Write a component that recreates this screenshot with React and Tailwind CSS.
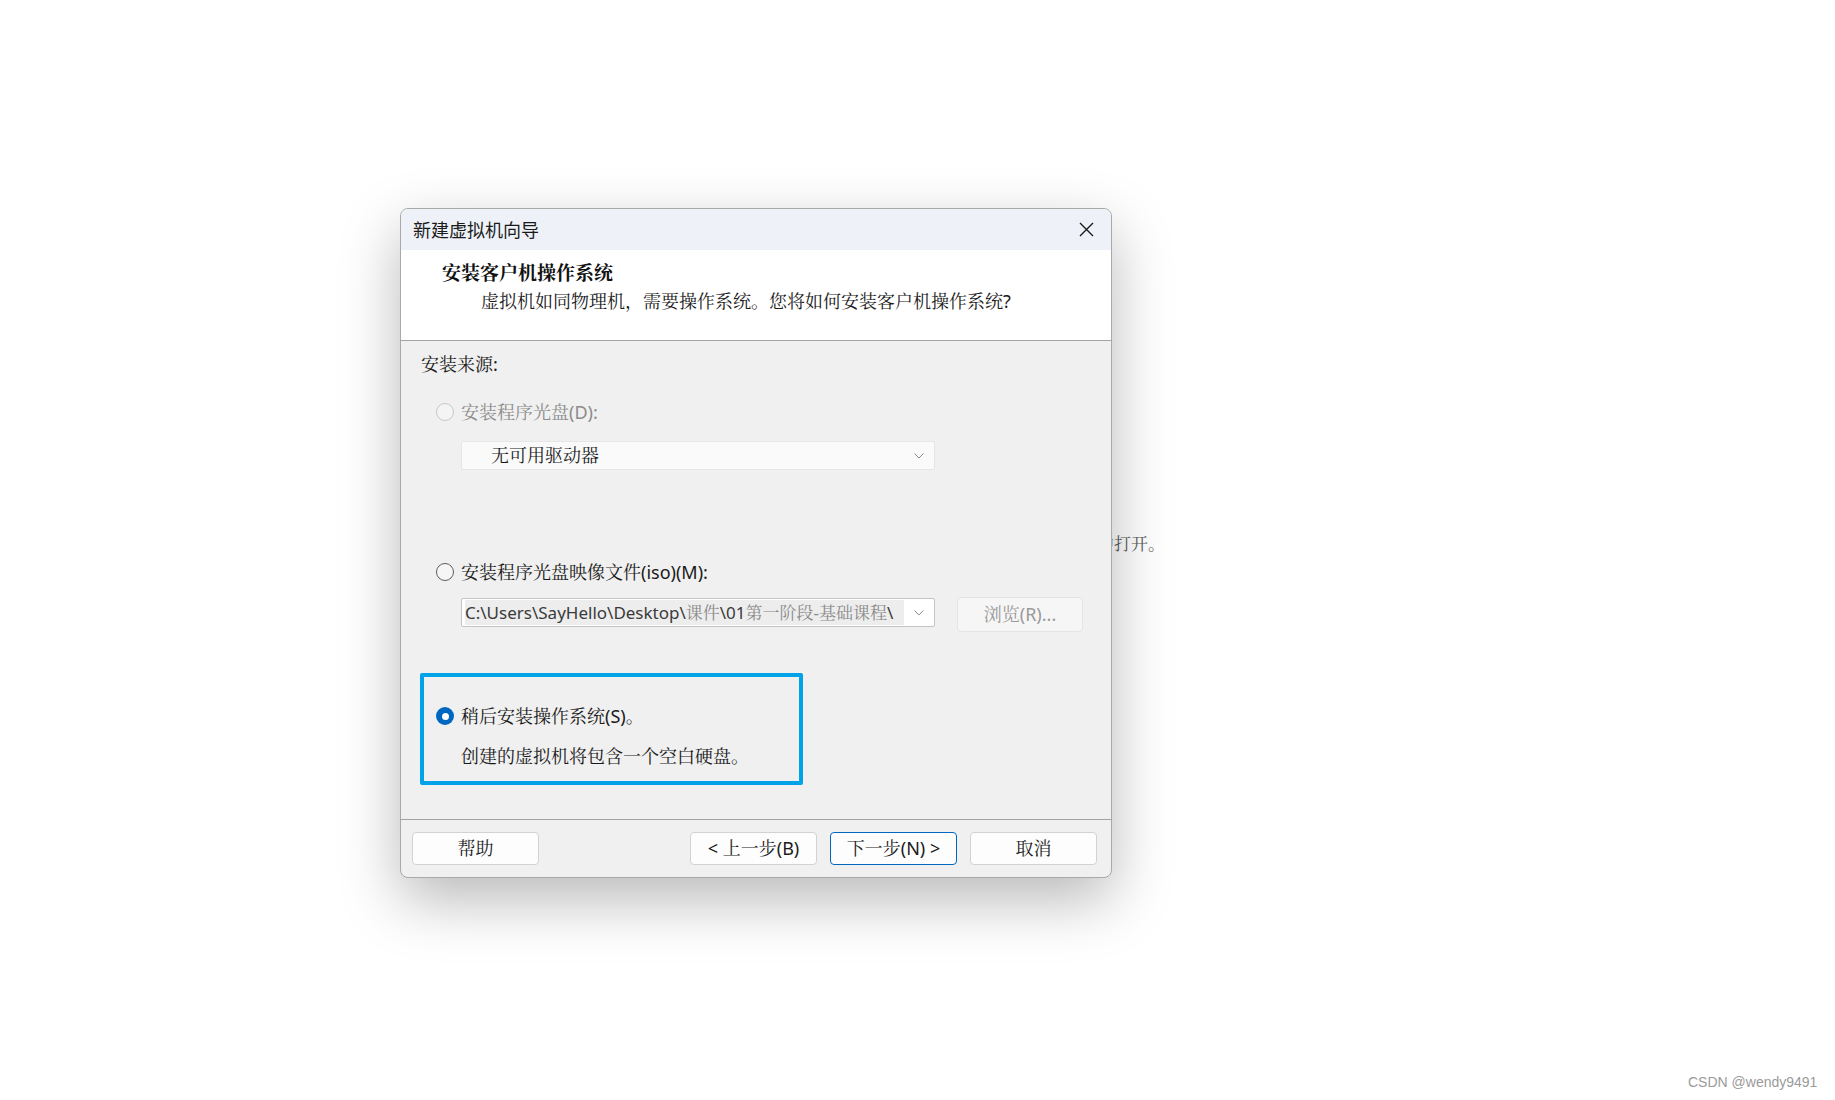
import React from 'react';

const font = "font-['Noto_Sans','Noto_Serif_CJK_SC','Noto_Sans_CJK_SC',sans-serif]";

const Chevron = () => (
  <svg width="10" height="6" viewBox="0 0 10 6" fill="none">
    <polyline points="0.5,0.5 5,5 9.5,0.5" stroke="#8a8a8a" strokeWidth="1" />
  </svg>
);

const Radio = ({ state }) => {
  if (state === 'checked') {
    return (
      <div className="w-[18px] h-[18px] rounded-full bg-[#0067c0] flex items-center justify-center shrink-0">
        <div className="w-[7px] h-[7px] rounded-full bg-white" />
      </div>
    );
  }
  if (state === 'disabled') {
    return <div className="w-[18px] h-[18px] rounded-full border border-[#c6c6c6] bg-[#f4f4f4] shrink-0" />;
  }
  return <div className="w-[18px] h-[18px] rounded-full border-[1.5px] border-[#5c5c5c] bg-[#f6f6f6] shrink-0" />;
};

const Button = ({ children, primary }) => (
  <button
    className={
      primary
        ? 'w-[127px] h-[33px] rounded-[4px] border border-[#0067c0] bg-[#fdfdfd] text-[18px] text-[#1a1a1a] flex items-center justify-center'
        : 'w-[127px] h-[33px] rounded-[4px] border border-[#d2d2d2] bg-[#fdfdfd] text-[18px] text-[#1a1a1a] flex items-center justify-center'
    }
  >
    {children}
  </button>
);

export default function App() {
  return (
    <div className={`relative w-[1835px] h-[1100px] bg-white overflow-hidden ${font}`}>
      {/* page text behind the dialog */}
      <div className="absolute left-[1097px] top-[533px] text-[17px] leading-[22px] text-[#5a5a5a]">中打开。</div>

      <div className="pl-[400px] pt-[208px]">
        <div className="relative z-10 w-[712px] h-[670px] rounded-[8px] border border-[#a9a9a9] bg-[#f0f0f0] overflow-hidden flex flex-col shadow-[0_22px_60px_rgba(0,0,0,0.28)]">
          {/* title bar */}
          <div className="h-[41px] shrink-0 bg-[#eef2f8] flex items-center justify-between pl-[12px] pr-[17px]">
            <span className="text-[18px] text-[#1a1a1a] font-['Noto_Sans_CJK_SC',sans-serif]">新建虚拟机向导</span>
            <svg width="15" height="15" viewBox="0 0 15 15">
              <path d="M1 1 L14 14 M14 1 L1 14" stroke="#1a1a1a" strokeWidth="1.4" />
            </svg>
          </div>

          {/* header */}
          <div className="h-[91px] shrink-0 bg-white border-b border-[#a3a3a3] pt-[13px]">
            <div className="pl-[41px] text-[19px] leading-[21px] font-bold text-[#111]">安装客户机操作系统</div>
            <div className="pl-[80px] mt-[7px] text-[18px] leading-[20px] text-[#1a1a1a]">
              虚拟机如同物理机，需要操作系统。您将如何安装客户机操作系统?
            </div>
          </div>

          {/* body */}
          <div className="h-[478px] shrink-0 pt-[13px]">
            <div className="pl-[20px] text-[18px] leading-[20px] text-[#1a1a1a]">安装来源:</div>

            <div className="mt-[28px] pl-[35px] h-[20px] flex items-center gap-[7px]">
              <Radio state="disabled" />
              <span className="text-[18px] leading-[20px] text-[#8c8c8c]">安装程序光盘(D):</span>
            </div>

            <div className="mt-[19px] ml-[60px] w-[474px] h-[29px] bg-[#fafafa] border border-[#e6e6e6] rounded-[2px] flex items-center justify-between pl-[29px] pr-[10px]">
              <span className="text-[18px] text-[#1a1a1a]">无可用驱动器</span>
              <Chevron />
            </div>

            <div className="mt-[92px] pl-[35px] h-[20px] flex items-center gap-[7px]">
              <Radio state="empty" />
              <span className="text-[18px] leading-[20px] text-[#1a1a1a]">安装程序光盘映像文件(iso)(M):</span>
            </div>

            <div className="mt-[15px] pl-[60px] flex items-start gap-[22px]">
              <div className="mt-[1px] w-[474px] h-[29px] bg-white border border-[#c4c4c4] rounded-[2px] flex items-center pl-[3px] pr-[10px] gap-[10px]">
                <div className="h-[25px] w-[444px] bg-[#ededed] flex items-center overflow-hidden whitespace-nowrap text-[17px]">
                  <span className="text-[#3a3a3a]">C:\Users\SayHello\Desktop\</span>
                  <span className="text-[#8a8a8a]">课件</span>
                  <span className="text-[#3a3a3a]">\01</span>
                  <span className="text-[#8a8a8a]">第一阶段-基础课程</span>
                  <span className="text-[#3a3a3a]">\</span>
                </div>
                <Chevron />
              </div>
              <div className="w-[126px] h-[35px] rounded-[4px] border border-[#e4e4e4] bg-[#f6f6f6] flex items-center justify-center text-[18px] text-[#9a9a9a]">
                浏览(R)...
              </div>
            </div>

            <div className="mt-[41px] ml-[19px] w-[383px] h-[112px] border-4 border-[#00a2e8] rounded-[2px] pt-[29px]">
              <div className="pl-[12px] h-[20px] flex items-center gap-[7px]">
                <Radio state="checked" />
                <span className="text-[18px] leading-[20px] text-[#1a1a1a]">稍后安装操作系统(S)。</span>
              </div>
              <div className="mt-[20px] pl-[37px] text-[18px] leading-[20px] text-[#1a1a1a]">创建的虚拟机将包含一个空白硬盘。</div>
            </div>
          </div>

          {/* footer */}
          <div className="flex-1 border-t border-[#a3a3a3] flex items-center justify-between pl-[11px] pr-[14px]">
            <Button>帮助</Button>
            <div className="flex items-center gap-[13px]">
              <Button>&lt; 上一步(B)</Button>
              <Button primary>下一步(N) &gt;</Button>
              <Button>取消</Button>
            </div>
          </div>
        </div>
      </div>

      <div className="absolute left-[1688px] top-[1073px] text-[14px] leading-[18px] text-[#9a9a9a] font-['Liberation_Sans',sans-serif]">
        CSDN @wendy9491
      </div>
    </div>
  );
}
